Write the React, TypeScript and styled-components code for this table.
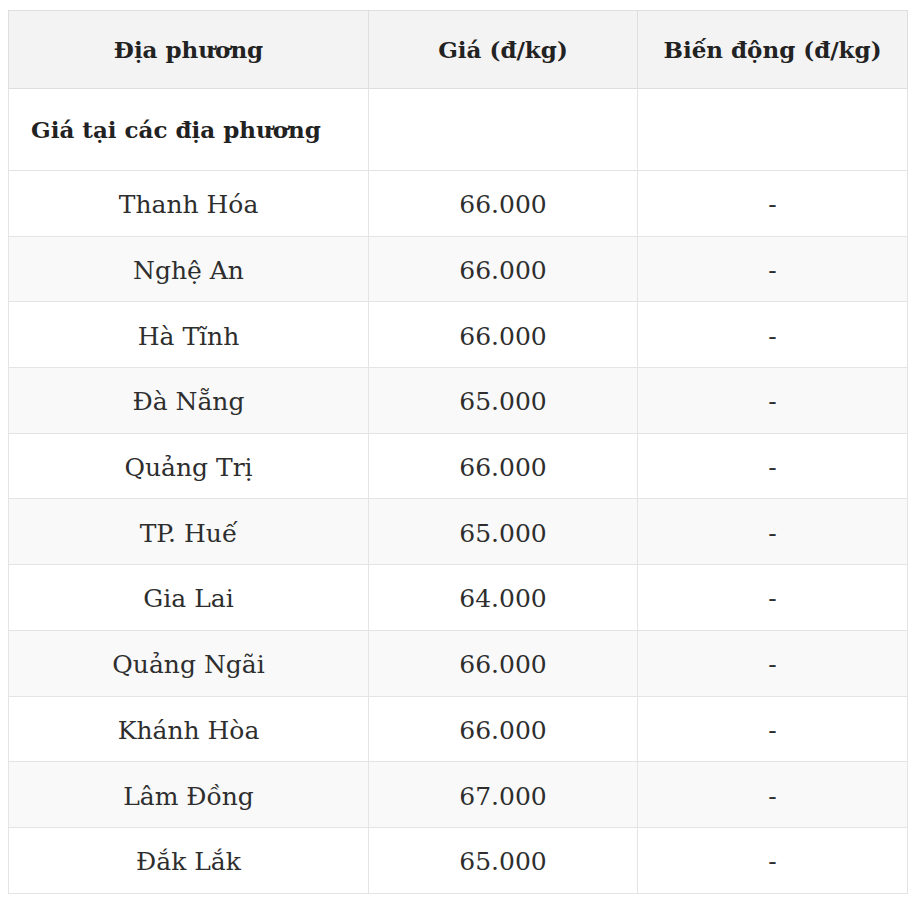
import { createGlobalStyle } from "styled-components"
import styled from "styled-components"

const GlobalStyle = createGlobalStyle`
  html, body {
    margin: 0;
    padding: 0;
    background: #fff;
  }
  body {
    font-family: "DejaVu Serif", "Liberation Serif", serif;
    color: #333;
  }
`

const Page = styled.div`
  padding: 10px 12px 0 8px;
`

const Table = styled.table`
  width: 899px;
  border-collapse: collapse;
  table-layout: fixed;

  th, td {
    box-sizing: border-box;
  }
`

const HeadCell = styled.th`
  height: 78px;
  padding: 0 6px;
  background: #f3f3f3;
  border: 1px solid #dedede;
  color: #222;
  font-size: 23px;
  font-weight: 700;
  text-align: center;
  vertical-align: middle;
  white-space: nowrap;
`

const Row = styled.tr<{ $striped?: boolean }>`
  background: ${p => (p.$striped ? "#f9f9f9" : "#fff")};
`

const SectionCell = styled.td`
  height: 82px;
  padding: 0 22px;
  border: 1px solid #e4e4e4;
  color: #222;
  font-size: 23px;
  font-weight: 700;
  text-align: left;
  vertical-align: middle;
`

const Cell = styled.td`
  height: 65.7px;
  padding: 3px 8px 0;
  border: 1px solid #e4e4e4;
  color: #2e2e2e;
  font-size: 25px;
  text-align: center;
  vertical-align: middle;
`

const rows = [
  { place: "Thanh Hóa", price: "66.000" },
  { place: "Nghệ An", price: "66.000" },
  { place: "Hà Tĩnh", price: "66.000" },
  { place: "Đà Nẵng", price: "65.000" },
  { place: "Quảng Trị", price: "66.000" },
  { place: "TP. Huế", price: "65.000" },
  { place: "Gia Lai", price: "64.000" },
  { place: "Quảng Ngãi", price: "66.000" },
  { place: "Khánh Hòa", price: "66.000" },
  { place: "Lâm Đồng", price: "67.000" },
  { place: "Đắk Lắk", price: "65.000" },
]

export default function App() {
  return (
    <>
      <GlobalStyle />
      <Page>
        <Table>
          <colgroup>
            <col style={{ width: 360 }} />
            <col style={{ width: 269 }} />
            <col style={{ width: 270 }} />
          </colgroup>
          <thead>
            <tr>
              <HeadCell>Địa phương</HeadCell>
              <HeadCell>Giá (đ/kg)</HeadCell>
              <HeadCell>Biến động (đ/kg)</HeadCell>
            </tr>
          </thead>
          <tbody>
            <Row>
              <SectionCell>Giá tại các địa phương</SectionCell>
              <Cell />
              <Cell />
            </Row>
            {rows.map((r, i) => (
              <Row key={r.place} $striped={i % 2 === 1}>
                <Cell>{r.place}</Cell>
                <Cell>{r.price}</Cell>
                <Cell>-</Cell>
              </Row>
            ))}
          </tbody>
        </Table>
      </Page>
    </>
  )
}
